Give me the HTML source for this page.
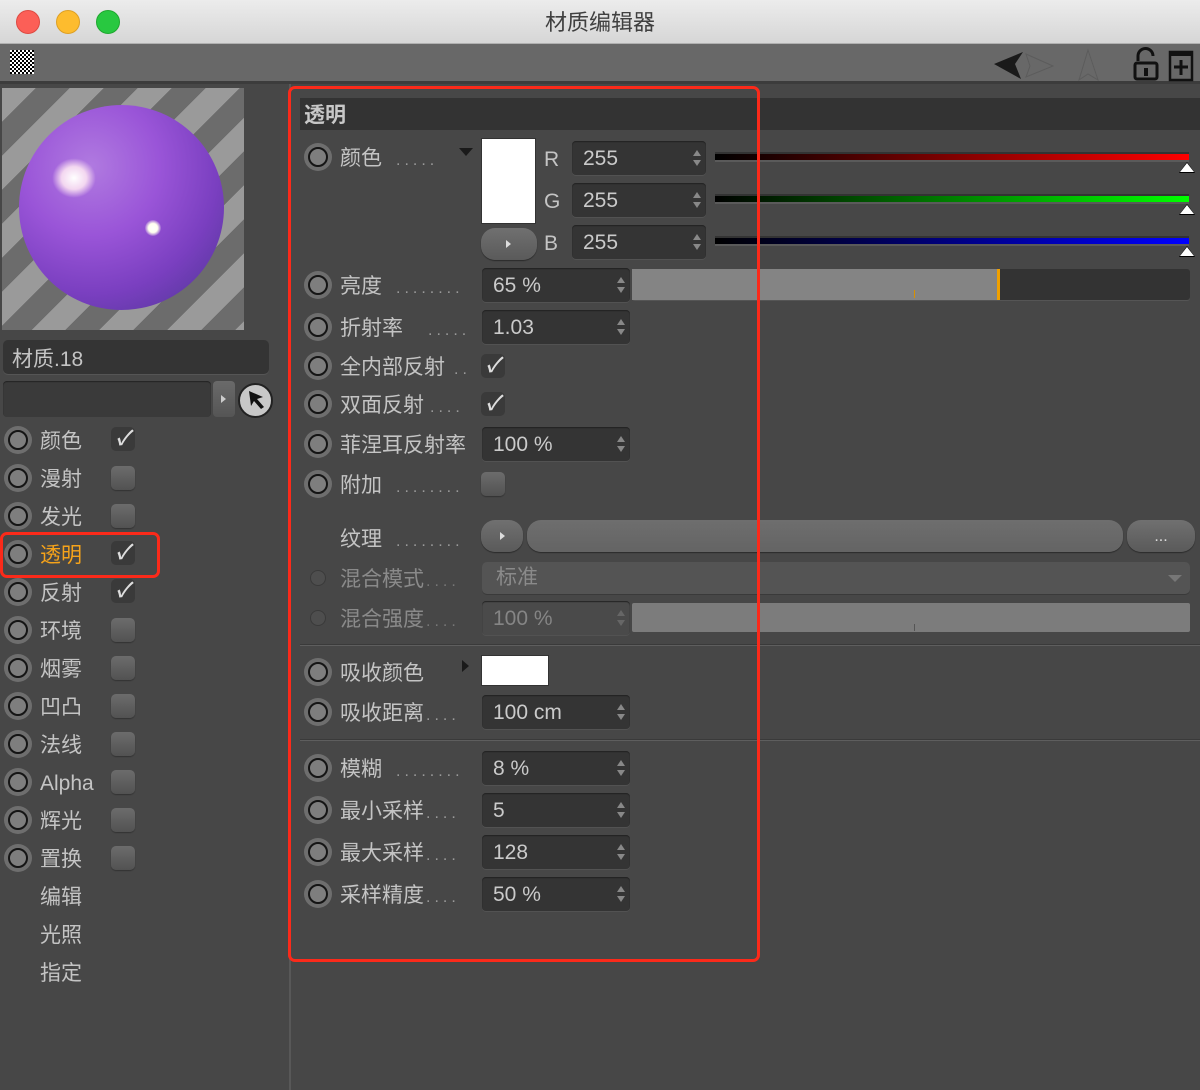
<!DOCTYPE html>
<html><head><meta charset="utf-8"><style>
*{margin:0;padding:0;box-sizing:border-box}
body{width:1200px;height:1090px;background:#474747;font-family:"Liberation Sans","Noto Sans CJK SC",sans-serif;position:relative;overflow:hidden}
div,span{position:absolute}
.rad{width:28px;height:28px;border-radius:50%;background:#6e6e6e}
.rad::after{content:"";position:absolute;left:4px;top:4px;width:20px;height:20px;border-radius:50%;border:2px solid #151515;background:#7e7e7e;box-sizing:border-box}
.srad{width:16px;height:16px;border-radius:50%;border:1px solid #3a3a3a;background:#4e4e4e}
.l{font-size:21px;color:#c4c4c4;line-height:28px;white-space:nowrap;margin-top:2px}
.d{font-size:16px;color:#9a9a9a;letter-spacing:4px;line-height:28px;margin-top:4px}
.f{background:#343434;border-radius:4px;box-shadow:inset 0 1px 1px #222,0 1px 0 #525252;height:34px;color:#cacaca;font-size:21px;padding-left:11px;line-height:36px}
.f i{position:absolute;right:5px;top:9px;width:0;height:0;border-left:4px solid transparent;border-right:4px solid transparent;border-bottom:6px solid #888}
.f b{position:absolute;right:5px;top:19px;width:0;height:0;border-left:4px solid transparent;border-right:4px solid transparent;border-top:6px solid #888}
.cb{width:24px;height:24px;border-radius:5px;background:linear-gradient(#6c6c6c,#525252);box-shadow:0 1px 1px #333}
.ck{width:24px;height:24px;border-radius:5px;background:#3a3a3a;color:#ddd;font-size:20px;line-height:24px;text-align:center;font-style:italic;font-weight:bold}
.gr{height:10px;left:715px;width:474px;border-top:2px solid #333;border-bottom:2px solid #5a5a5a}
.tri{width:0;height:0;border-left:7px solid transparent;border-right:7px solid transparent;border-bottom:9px solid #fff;left:1180px}
.tri::before{content:"";position:absolute;left:-8px;top:-1px;border-left:8px solid transparent;border-right:8px solid transparent;border-bottom:11px solid #000;z-index:-1}
</style></head><body>
<div style="left:0;top:0;width:1200px;height:44px;background:linear-gradient(#ececec,#d6d6d6);border-bottom:1px solid #b0b0b0"></div>
<div style="left:16px;top:10px;width:24px;height:24px;border-radius:50%;background:#fc5f57;border:1px solid #de4a42"></div>
<div style="left:56px;top:10px;width:24px;height:24px;border-radius:50%;background:#fdbc2e;border:1px solid #dea024"></div>
<div style="left:96px;top:10px;width:24px;height:24px;border-radius:50%;background:#28c840;border:1px solid #1fa82f"></div>
<div style="left:0;top:8px;width:1200px;text-align:center;font-size:22px;color:#404040;line-height:30px">材质编辑器</div>
<div style="left:0;top:44px;width:1200px;height:38px;background:#686868"></div>
<div style="left:0;top:81px;width:1200px;height:3px;background:#3c3c3c"></div>
<div style="left:10px;top:50px;width:24px;height:24px;background-image:repeating-conic-gradient(#000 0 25%,#fff 0 50%);background-size:4px 4px"></div>
<svg style="position:absolute;left:990px;top:44px" width="210" height="38">
<path d="M4 20 L33 8 L25 20 L31 35 Z" fill="#1a1a1a"/>
<path d="M36 10 L63 22 L36 33 L40 22 Z" fill="none" stroke="#5c5c5c" stroke-width="1"/>
<path d="M98 6 L89 36 L98 30 L108 36 Z" fill="none" stroke="#5c5c5c" stroke-width="1"/>
<path d="M148 17 V12 a7.5 7.5 0 0 1 15 0" fill="none" stroke="#111" stroke-width="3"/>
<rect x="145" y="19" width="22" height="16" rx="2" fill="none" stroke="#111" stroke-width="3"/>
<rect x="154" y="24" width="4" height="8" fill="#111"/>
<rect x="180" y="8" width="22" height="28" fill="none" stroke="#111" stroke-width="2.5"/>
<rect x="180" y="8" width="22" height="4" fill="#111"/>
<path d="M191 16 V31 M184 23 H198" stroke="#111" stroke-width="3"/>
</svg>
<div style="left:289px;top:84px;width:2px;height:1006px;background:#585858"></div>
<div style="left:2px;top:88px;width:242px;height:242px;overflow:hidden;background:repeating-linear-gradient(135deg,#9a9a9a 0 24px,#6c6c6c 24px 48px)">
<div style="left:17px;top:17px;width:205px;height:205px;border-radius:50%;background:radial-gradient(circle at 35% 30%,#b07ae0 0%,#9a55d8 35%,#7a3fc0 65%,#4a3590 100%)"></div>
<div style="left:50px;top:70px;width:44px;height:40px;border-radius:50%;background:radial-gradient(#fff 0%,#f3d7f0 40%,rgba(230,180,230,0) 70%)"></div>
<div style="left:143px;top:132px;width:16px;height:16px;border-radius:50%;background:radial-gradient(#fff 0%,#ffe 40%,rgba(255,255,255,0) 75%)"></div>
</div>
<div style="left:3px;top:340px;width:266px;height:34px;background:#343434;border-radius:5px;box-shadow:0 1px 0 #555"></div>
<div class="l" style="left:12px;top:344px;color:#c4c4c4">材质.18</div>
<div style="left:3px;top:381px;width:208px;height:36px;background:#3a3a3a;border-radius:4px;box-shadow:inset 0 1px 1px #222"></div>
<div style="left:213px;top:381px;width:22px;height:36px;background:linear-gradient(#6a6a6a,#555);border-radius:4px"></div>
<div style="left:221px;top:395px;border-top:4px solid transparent;border-bottom:4px solid transparent;border-left:5px solid #ccc"></div>
<div style="left:238px;top:383px;width:35px;height:35px;border-radius:50%;background:#c8c8c8;border:2px solid #222"></div>
<svg style="position:absolute;left:242px;top:386px" width="28" height="28"><path d="M7 5 L21 11 L15 13 L22 21 L19 23 L12 15 L9 20 Z" fill="#111"/></svg>
<div class="rad" style="left:4px;top:426px"></div><div class="l" style="left:40px;top:426px">颜色</div><div class="ck" style="left:111px;top:427px">✓</div>
<div class="rad" style="left:4px;top:464px"></div><div class="l" style="left:40px;top:464px">漫射</div><div class="cb" style="left:111px;top:466px"></div>
<div class="rad" style="left:4px;top:502px"></div><div class="l" style="left:40px;top:502px">发光</div><div class="cb" style="left:111px;top:504px"></div>
<div class="rad" style="left:4px;top:540px"></div><div class="l" style="left:40px;top:540px;color:#f6a31a">透明</div><div class="ck" style="left:111px;top:541px">✓</div>
<div style="left:0;top:532px;width:160px;height:46px;border:3px solid #fb2a1a;border-radius:7px"></div>
<div class="rad" style="left:4px;top:578px"></div><div class="l" style="left:40px;top:578px">反射</div><div class="ck" style="left:111px;top:579px">✓</div>
<div class="rad" style="left:4px;top:616px"></div><div class="l" style="left:40px;top:616px">环境</div><div class="cb" style="left:111px;top:618px"></div>
<div class="rad" style="left:4px;top:654px"></div><div class="l" style="left:40px;top:654px">烟雾</div><div class="cb" style="left:111px;top:656px"></div>
<div class="rad" style="left:4px;top:692px"></div><div class="l" style="left:40px;top:692px">凹凸</div><div class="cb" style="left:111px;top:694px"></div>
<div class="rad" style="left:4px;top:730px"></div><div class="l" style="left:40px;top:730px">法线</div><div class="cb" style="left:111px;top:732px"></div>
<div class="rad" style="left:4px;top:768px"></div><div class="l" style="left:40px;top:768px">Alpha</div><div class="cb" style="left:111px;top:770px"></div>
<div class="rad" style="left:4px;top:806px"></div><div class="l" style="left:40px;top:806px">辉光</div><div class="cb" style="left:111px;top:808px"></div>
<div class="rad" style="left:4px;top:844px"></div><div class="l" style="left:40px;top:844px">置换</div><div class="cb" style="left:111px;top:846px"></div>
<div class="l" style="left:40px;top:882px">编辑</div>
<div class="l" style="left:40px;top:920px">光照</div>
<div class="l" style="left:40px;top:958px">指定</div>
<div style="left:300px;top:98px;width:900px;height:32px;background:#333"></div>
<div class="l" style="left:304px;top:100px;font-weight:bold;color:#c8c8c8">透明</div>
<div class="rad" style="left:304px;top:143px"></div><div class="l" style="left:340px;top:143px">颜色</div><div class="d" style="left:396px;top:143px">.....</div>
<div style="left:459px;top:148px;border-left:7px solid transparent;border-right:7px solid transparent;border-top:8px solid #1a1a1a"></div>
<div style="left:481px;top:138px;width:55px;height:86px;background:#fff;border:1px solid #333"></div>
<div style="left:481px;top:228px;width:56px;height:32px;border-radius:14px;background:linear-gradient(#707070,#5a5a5a);box-shadow:0 1px 1px #2a2a2a"></div>
<div style="left:506px;top:240px;border-top:4px solid transparent;border-bottom:4px solid transparent;border-left:5px solid #ddd"></div>
<div class="l" style="left:544px;top:144px">R</div><div class="l" style="left:544px;top:186px">G</div><div class="l" style="left:544px;top:228px">B</div>
<div class="f" style="left:572px;top:141px;width:134px">255<i></i><b></b></div>
<div class="f" style="left:572px;top:183px;width:134px">255<i></i><b></b></div>
<div class="f" style="left:572px;top:225px;width:134px">255<i></i><b></b></div>
<div class="gr" style="top:152px;background:linear-gradient(90deg,#000,#ff0000)"></div><div class="tri" style="top:163px"></div>
<div class="gr" style="top:194px;background:linear-gradient(90deg,#000,#00ff00)"></div><div class="tri" style="top:205px"></div>
<div class="gr" style="top:236px;background:linear-gradient(90deg,#000,#0000ff)"></div><div class="tri" style="top:247px"></div>
<div class="rad" style="left:304px;top:271px"></div><div class="l" style="left:340px;top:271px">亮度</div><div class="d" style="left:396px;top:271px">........</div>
<div class="f" style="left:482px;top:268px;width:148px">65 %<i></i><b></b></div>
<div style="left:632px;top:269px;width:558px;height:31px;background:#333;border-radius:3px;box-shadow:0 1px 0 #555"></div>
<div style="left:632px;top:269px;width:368px;height:31px;background:#848484"></div>
<div style="left:997px;top:269px;width:3px;height:31px;background:#f0a000"></div>
<div style="left:914px;top:290px;width:1px;height:8px;background:#d89000"></div>
<div class="rad" style="left:304px;top:313px"></div><div class="l" style="left:340px;top:313px">折射率</div><div class="d" style="left:428px;top:313px">.....</div>
<div class="f" style="left:482px;top:310px;width:148px">1.03<i></i><b></b></div>
<div class="rad" style="left:304px;top:352px"></div><div class="l" style="left:340px;top:352px">全内部反射</div><div class="d" style="left:454px;top:352px">..</div><div class="ck" style="left:481px;top:354px">✓</div>
<div class="rad" style="left:304px;top:390px"></div><div class="l" style="left:340px;top:390px">双面反射</div><div class="d" style="left:430px;top:390px">....</div><div class="ck" style="left:481px;top:392px">✓</div>
<div class="rad" style="left:304px;top:430px"></div><div class="l" style="left:340px;top:430px">菲涅耳反射率</div>
<div class="f" style="left:482px;top:427px;width:148px">100 %<i></i><b></b></div>
<div class="rad" style="left:304px;top:470px"></div><div class="l" style="left:340px;top:470px">附加</div><div class="d" style="left:396px;top:470px">........</div><div class="cb" style="left:481px;top:472px"></div>
<div class="l" style="left:340px;top:524px">纹理</div><div class="d" style="left:396px;top:524px">........</div>
<div style="left:481px;top:520px;width:42px;height:32px;border-radius:14px;background:linear-gradient(#707070,#5a5a5a);box-shadow:0 1px 1px #2a2a2a"></div>
<div style="left:500px;top:532px;border-top:4px solid transparent;border-bottom:4px solid transparent;border-left:5px solid #ddd"></div>
<div style="left:527px;top:520px;width:596px;height:32px;border-radius:14px;background:linear-gradient(#6e6e6e,#646464);box-shadow:0 1px 1px #2a2a2a"></div>
<div style="left:1127px;top:520px;width:68px;height:32px;border-radius:14px;background:linear-gradient(#707070,#5a5a5a);box-shadow:0 1px 1px #2a2a2a;color:#ddd;font-size:16px;text-align:center;line-height:34px">...</div>
<div class="srad" style="left:310px;top:570px"></div><div class="l" style="left:340px;top:564px;color:#8a8a8a">混合模式</div><div class="d" style="left:426px;top:564px;color:#777">....</div>
<div style="left:482px;top:562px;width:708px;height:32px;background:#545454;border-radius:5px;box-shadow:0 1px 0 #3a3a3a"></div>
<div class="l" style="left:496px;top:562px;color:#8a8a8a">标准</div>
<div style="left:1168px;top:575px;border-left:7px solid transparent;border-right:7px solid transparent;border-top:7px solid #777"></div>
<div class="srad" style="left:310px;top:610px"></div><div class="l" style="left:340px;top:604px;color:#8a8a8a">混合强度</div><div class="d" style="left:426px;top:604px;color:#777">....</div>
<div class="f" style="left:482px;top:601px;width:148px;background:#4a4a4a;color:#858585">100 %<i style="border-bottom-color:#666"></i><b style="border-top-color:#666"></b></div>
<div style="left:632px;top:603px;width:558px;height:29px;background:#7c7c7c;border-radius:2px"></div>
<div style="left:914px;top:624px;width:1px;height:7px;background:#555"></div>
<div style="left:300px;top:644px;width:900px;height:2px;background:#5e5e5e;border-top:1px solid #3a3a3a"></div>
<div class="rad" style="left:304px;top:658px"></div><div class="l" style="left:340px;top:658px">吸收颜色</div>
<div style="left:462px;top:660px;border-top:6px solid transparent;border-bottom:6px solid transparent;border-left:7px solid #1a1a1a"></div>
<div style="left:481px;top:655px;width:68px;height:31px;background:#fff;border:1px solid #333"></div>
<div class="rad" style="left:304px;top:698px"></div><div class="l" style="left:340px;top:698px">吸收距离</div><div class="d" style="left:426px;top:698px">....</div>
<div class="f" style="left:482px;top:695px;width:148px">100 cm<i></i><b></b></div>
<div style="left:300px;top:739px;width:900px;height:2px;background:#5e5e5e;border-top:1px solid #3a3a3a"></div>
<div class="rad" style="left:304px;top:754px"></div><div class="l" style="left:340px;top:754px">模糊</div><div class="d" style="left:396px;top:754px">........</div>
<div class="f" style="left:482px;top:751px;width:148px">8 %<i></i><b></b></div>
<div class="rad" style="left:304px;top:796px"></div><div class="l" style="left:340px;top:796px">最小采样</div><div class="d" style="left:426px;top:796px">....</div>
<div class="f" style="left:482px;top:793px;width:148px">5<i></i><b></b></div>
<div class="rad" style="left:304px;top:838px"></div><div class="l" style="left:340px;top:838px">最大采样</div><div class="d" style="left:426px;top:838px">....</div>
<div class="f" style="left:482px;top:835px;width:148px">128<i></i><b></b></div>
<div class="rad" style="left:304px;top:880px"></div><div class="l" style="left:340px;top:880px">采样精度</div><div class="d" style="left:426px;top:880px">....</div>
<div class="f" style="left:482px;top:877px;width:148px">50 %<i></i><b></b></div>
<div style="left:288px;top:86px;width:472px;height:876px;border:3px solid #fb2a1a;border-radius:7px"></div>
</body></html>
